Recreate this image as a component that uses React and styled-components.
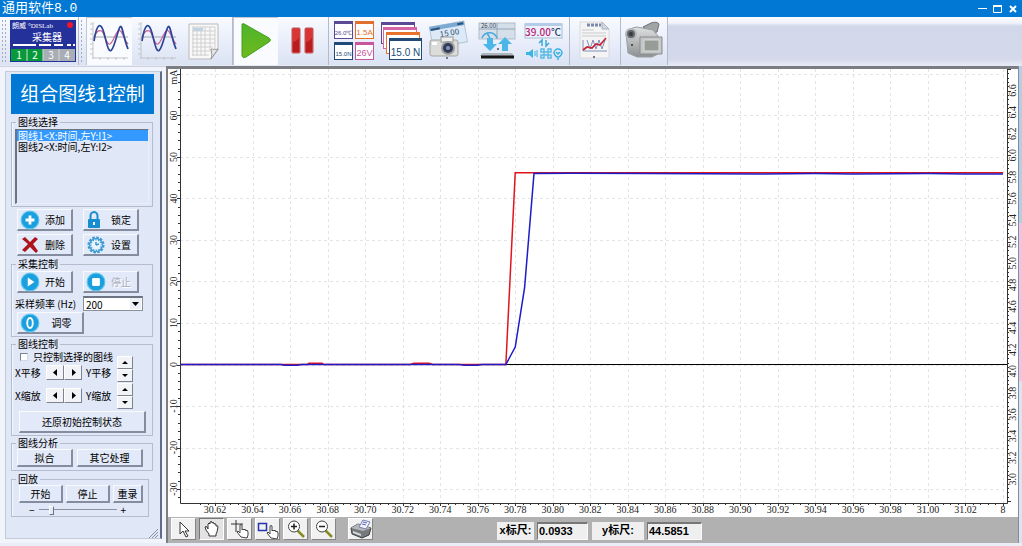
import React, { useLayoutEffect, useRef, useState } from 'react';
import styled, { createGlobalStyle } from 'styled-components';

const GlobalStyle = createGlobalStyle`
  * {
    box-sizing: border-box;
  }

  body {
    margin: 0;
    font-family: 'Noto Sans CJK SC', sans-serif;
    font-size: 10px;
    line-height: 10px;
    color: #000;
  }

  button, input, select {
    font: inherit;
    color: inherit;
    margin: 0;
    padding: 0;
    border-radius: 0;
  }
`;

const Window = styled.div`
  min-height: 100vh;
  display: flex;
  flex-direction: column;
  background: #e9edf6;
`;

/* Title bar */

const TitleBar = styled.header`
  height: 17px;
  padding: 0 4px 0 2px;
  display: flex;
  align-items: center;
  justify-content: space-between;
  background: #0078d4;
  color: #fff;
`;

const Title = styled.h1`
  margin: 0;
  font-family: 'Liberation Mono', 'Noto Sans CJK SC', monospace;
  font-size: 13px;
  font-weight: 400;
  line-height: 17px;
`;

const WindowButtons = styled.div`
  display: flex;
  gap: 4px;
`;

const WindowButton = styled.button`
  width: 11px;
  height: 11px;
  border: 0;
  background: none;

  svg {
    display: block;
  }
`;

/* Toolbar */

const Toolbar = styled.nav`
  height: 49px;
  flex: none;
  display: flex;
  align-items: stretch;
  padding-bottom: 1px;
  background: linear-gradient(#fbfcfe 0, #f0f3fb 6px, #d2d8ea 9px, #d3d9ea 42px, #e6eaf5 48px);
`;

const ToolGroup = styled.div`
  display: flex;
  align-items: stretch;
  border-right: 1px solid #b3bacb;
  background: linear-gradient(#f8faff, #e6ecf9 60%, #dbe2f2);
`;

const Grip = styled.span`
  width: ${(props) => props.$width}px;
  margin: 2px 0;
  background: radial-gradient(circle, #a3abbd 1px, transparent 1px) 0 0 / 4px 4px;
  background-clip: content-box;
  padding: 0 2px;
`;

const ToolButton = styled.button`
  width: ${(props) => props.$width}px;
  border: 0;
  display: flex;
  align-items: center;
  justify-content: center;
  background: ${(props) => (props.$active ? '#fafbfe' : 'none')};
  box-shadow: ${(props) => (props.$active ? 'inset 1px 1px 0 #c3c8d4' : 'none')};
`;

/* Main area */

const Body = styled.div`
  flex: 1;
  display: flex;
  padding-bottom: 3px;
`;

const Sidebar = styled.aside`
  width: 166px;
  flex: none;
  display: flex;
  padding: 4px 4px 4px 5px;
  background: #f1f4fa;
  border-top: 1px solid #ccd2e0;
`;

const Panel = styled.form`
  flex: 1;
  display: flex;
  flex-direction: column;
  padding: 2px 6px 0 5px;
  background: #e0e7f7;
  border: 1px solid #c3cada;
  border-right: 2px solid #5f6d89;
`;

const PanelTitle = styled.h2`
  margin: 0 0 3px;
  height: 40px;
  width: 143px;
  background: #0078d4;
  color: #fff;
  font-size: 19px;
  font-weight: 400;
  line-height: 38px;
  text-align: center;
`;

const Group = styled.fieldset`
  min-width: 0;
  width: ${(props) => (props.$narrow ? 138 : 142)}px;
  margin: 0 0 ${(props) => props.$after || 2}px;
  padding: ${(props) => props.$pad || '2px 3px'};
  border: 1px solid #b4bccd;
  box-shadow: inset 1px 0 0 #f4f7fd;
`;

const Legend = styled.legend`
  margin-left: 1px;
  padding: 0 2px;
  height: 10px;
`;

const Row = styled.div`
  display: flex;
  align-items: ${(props) => props.$align || 'center'};
  gap: ${(props) => props.$gap || 0}px;
  margin-bottom: ${(props) => props.$after || 0}px;
  padding-left: ${(props) => props.$indent || 0}px;
`;

const Column = styled.div`
  display: flex;
  flex-direction: column;
  gap: ${(props) => props.$gap || 0}px;
  padding-top: ${(props) => props.$top || 0}px;
`;

const CurveList = styled.select`
  display: block;
  width: 134px;
  height: 75px;
  overflow: hidden;
  background: #e0e7f7;
  border: 1px solid #e9eef9;
  border-top: 1px solid #6c7484;
  border-left: 2px solid #6c7484;
  outline: 0;

  option {
    display: flex;
    align-items: center;
    height: 11px;
    min-height: 11px;
    padding: 0 0 0 1px;
  }

  option:checked {
    background: #3399ff linear-gradient(#3399ff, #3399ff);
    color: #fff;
    -webkit-text-fill-color: #fff;
  }
`;

const Button = styled.button`
  width: ${(props) => props.$width}px;
  height: ${(props) => (props.$short ? 18 : 22)}px;
  display: flex;
  align-items: center;
  justify-content: ${(props) => (props.$icon ? 'space-between' : 'center')};
  padding: ${(props) => (props.$icon ? '0 6px 0 2px' : '0')};
  background: #e2e9f8;
  border: 1px solid #f8faff;
  border-right: 2px solid #858c9d;
  border-bottom: 2px solid #858c9d;
  white-space: nowrap;

  &:disabled {
    color: #a9afbc;
    text-shadow: 1px 1px 0 #fff;
  }
`;

const RateSelect = styled.span`
  position: relative;
  width: 60px;
  height: 15px;

  select {
    appearance: none;
    display: block;
    width: 100%;
    height: 15px;
    padding-left: 2px;
    background: #fff;
    border: 1px solid #8b909c;
    border-top: 2px solid #6c7484;
    line-height: 11px;
  }

  svg {
    position: absolute;
    right: 2px;
    top: 2px;
    background: #eceff6;
    pointer-events: none;
  }
`;

const CheckLabel = styled.label`
  display: flex;
  align-items: center;
  gap: 5px;
  padding-left: 5px;
  height: 10px;
  white-space: nowrap;

  input {
    appearance: none;
    width: 8px;
    height: 8px;
    background: #fff;
    border: 1px solid #d5d9e2;
    border-top-color: #7c8290;
    border-left-color: #7c8290;
  }

  input:checked {
    background: #3399ff;
  }
`;

const AxisText = styled.span`
  width: ${(props) => props.$width}px;
  white-space: nowrap;
`;

const ArrowButton = styled.button`
  width: ${(props) => (props.$vertical ? 16 : 18)}px;
  height: ${(props) => (props.$vertical ? 13 : 15)}px;
  display: flex;
  align-items: center;
  justify-content: center;
  background: #f1f3f7;
  border: 1px solid #fff;
  border-right-color: #7d8390;
  border-bottom-color: #7d8390;
`;

const Range = styled.input`
  appearance: none;
  width: 78px;
  height: 10px;
  background: linear-gradient(#8b92a1, #8b92a1) 0 4px / 100% 1px no-repeat;

  &::-webkit-slider-thumb {
    appearance: none;
    width: 5px;
    height: 9px;
    background: #e2e9f8;
    border: 1px solid #fff;
    border-right-color: #6c7484;
    border-bottom-color: #6c7484;
  }
`;

const ResizeGrip = styled.svg`
  align-self: flex-end;
  margin: auto -4px 0 0;
`;

const Workspace = styled.main`
  flex: 1;
  min-width: 0;
  display: flex;
  flex-direction: column;
  border-top: 3px solid #7b7d82;
  border-left: 2px solid #7b7d82;
`;

const ChartArea = styled.div`
  flex: 1;
  min-height: 300px;
  position: relative;
  background: #fff;
`;

const ChartSvg = styled.svg`
  position: absolute;
  inset: 0;
  width: 100%;
  height: 100%;

  text {
    font-family: 'Liberation Serif', serif;
    font-size: 10px;
    fill: #222;
    text-anchor: middle;
  }
`;

const WindowEdge = styled.div`
  width: 4px;
  flex: none;
  border-left: 1px solid #7c8db0;
  background: linear-gradient(#b9cddf 0 33%, #f2c4dc 33% 66%, #dfe3ea 66%);
`;

const StatusBar = styled.footer`
  height: 26px;
  flex: none;
  display: flex;
  align-items: flex-start;
  padding: 1px 3px;
  background: #b1b1b1;
`;

const Tools = styled.div`
  display: flex;
  gap: 3px;
  width: 326px;
`;

const StatusButton = styled.button`
  width: 25px;
  height: 22px;
  flex: none;
  display: flex;
  align-items: center;
  justify-content: center;
  margin-left: ${(props) => (props.$apart ? 9 : 0)}px;
  background: ${(props) => (props.$active ? '#e3e3e3' : '#f1f1f1')};
  border: 1px solid;
  border-color: ${(props) => (props.$active ? '#777 #fff #fff #777' : '#fff #858585 #858585 #fff')};
`;

const Readout = styled.label`
  display: flex;
  gap: 3px;
  margin: 4px 4px 0 0;
  height: 18px;
  font-family: 'Liberation Sans', 'Noto Sans CJK SC', sans-serif;
  font-size: 11px;
  font-weight: 700;
  line-height: 17px;

  span {
    width: ${(props) => props.$width}px;
    background: #efefef;
    text-align: center;
    white-space: nowrap;
  }

  input {
    width: ${(props) => props.$field}px;
    padding-left: 1px;
    background: #efefef;
    border: 1px solid #fafafa;
    border-top: 2px solid #777;
    border-left: 1px solid #777;
  }
`;

/* Toolbar drawings */

const CollectorIcon = () => (
  <svg width="66" height="42" viewBox="0 0 66 42">
    <rect width="66" height="42" fill="#25319a" />
    <text x="2" y="8" fontSize="7" fill="#fff">朗威</text>
    <text x="18" y="8" fontSize="7" fill="#fff" fontFamily="Liberation Serif">°DISLab</text>
    <circle cx="60" cy="5" r="3" fill="#f0142c" />
    <text x="37" y="21" fontSize="10" fill="#fff" textAnchor="middle">采集器</text>
    <path d="M3 25h23M29 25h12M44 25h9M57 25h4M63 25h2" stroke="#fff" strokeWidth="2" />
    <rect x="1" y="29" width="32" height="12" fill="#079a3a" />
    <rect x="33" y="29" width="32" height="12" fill="#a9adb4" />
    <path d="M17 29v12M33 29v12M49 29v12" stroke="#d5d9df" />
    {['1', '2', '3', '4'].map((n, i) => (
      <text key={n} x={9 + i * 16} y="39" fontSize="10" fill="#fff" textAnchor="middle">{n}</text>
    ))}
  </svg>
);

const WaveIcon = () => (
  <svg width="42" height="42" viewBox="0 0 42 42" fill="none">
    <path d="M5 2v37M4 38h36M2 4h3M2 9h3M2 14h3M2 19h3M2 24h3M2 29h3M2 34h3M12 37v3M20 37v3M28 37v3M36 37v3" stroke="#c3c5ca" />
    <path d="M5 17h35" stroke="#a5a8ae" />
    <path d="M6 18C8 11 13 7 16 15s5 13 9 5 6-14 10-5 4 7 5 9" stroke="#c96095" strokeWidth="1.2" />
    <path d="M6 21C9 2 13 2 16 13s5 26 10 12 6-26 9-13 4 14 5 17" stroke="#2e4595" strokeWidth="1.7" />
  </svg>
);

const SheetIcon = () => (
  <svg width="38" height="38" viewBox="0 0 38 38">
    <path d="M1 2h29v26l-7 9H1z" fill="#f8f8f8" stroke="#b9b9bb" />
    <path d="M5 6h10v3H5z" fill="#b9d3ee" />
    <path d="M4 5h23v22M4 9h23M4 13h23M4 17h23M4 21h23M4 25h21M4 29h19M4 33h17M5 5v29M9 5v29M13 5v29M17 5v29M22 5v24" stroke="#d0d0d2" fill="none" />
    <path d="M30 27c-3 1-5 0-7 0 1 4 1 7 0 10z" fill="#e6e6e6" stroke="#989898" />
  </svg>
);

const PlayIcon = () => (
  <svg width="32" height="36" viewBox="0 0 32 36">
    <defs>
      <linearGradient id="play" x1="0" y1="0" x2="0" y2="1">
        <stop offset="0" stopColor="#4db52a" />
        <stop offset="1" stopColor="#70b91c" />
      </linearGradient>
    </defs>
    <path d="M2 1q2-1 4 1l23 13q3 2 0 4L6 34q-3 2-4-1z" fill="url(#play)" stroke="#43a01f" />
  </svg>
);

const PauseIcon = () => (
  <svg width="26" height="30" viewBox="0 0 26 30">
    <rect x="2" y="2" width="8" height="25" rx="1" fill="#d83535" stroke="#c05555" />
    <rect x="15" y="2" width="8" height="25" rx="1" fill="#d83535" stroke="#c05555" />
    <path d="M3 16q4-1 6-4v14H3zM16 16q4-1 6-4v14h-6z" fill="#b91c1f" />
  </svg>
);

const Meter = ({ x, y, w, h, color, label, size }) => (
  <g>
    <rect x={x + 0.5} y={y + 0.5} width={w - 1} height={h - 1} fill="#fff" stroke={color} />
    <rect x={x} y={y} width={w} height="3" fill={color} />
    <text x={x + w / 2} y={y + h - 4} fontSize={size} fill={color} textAnchor="middle" fontFamily="Liberation Sans">
      {label}
    </text>
  </g>
);

const MetersIcon = () => (
  <svg width="42" height="40" viewBox="0 0 42 40">
    <Meter x={1} y={0} w={19} h={18} color="#5a4a96" label="26.0℃" size={6} />
    <Meter x={22} y={0} w={19} h={18} color="#e0702c" label="1.5A" size={8} />
    <Meter x={1} y={21} w={19} h={18} color="#214a78" label="15.0N" size={6} />
    <Meter x={22} y={21} w={19} h={18} color="#c6559b" label="26V" size={9} />
  </svg>
);

const StackIcon = () => (
  <svg width="42" height="40" viewBox="0 0 42 40">
    <Meter x={0} y={1} w={34} h={22} color="#5a4a96" />
    <Meter x={2} y={6} w={34} h={22} color="#d665a5" />
    <Meter x={5} y={11} w={34} h={22} color="#e8722c" />
    <Meter x={8} y={17} w={33} h={22} color="#214a78" label="15.0 N" size={10} />
  </svg>
);

const SnapshotIcon = () => (
  <svg width="42" height="42" viewBox="0 0 42 42">
    <g transform="rotate(-10 20 15)">
      <rect x="3" y="4" width="35" height="21" fill="#dce9f6" stroke="#b7c5d5" />
      <rect x="3" y="4" width="35" height="4" fill="#7daad0" />
      <path d="M4 7h9M31 6h6" stroke="#29527c" strokeWidth="2" />
      <text x="12" y="16" fontSize="8" fill="#29496c">15 00</text>
    </g>
    <rect x="2" y="20" width="28" height="16" rx="2" fill="#dcdcda" stroke="#a3a3a3" />
    <rect x="13" y="17" width="12" height="5" fill="#efefef" stroke="#999" />
    <circle cx="20" cy="28" r="7" fill="#9c9ea3" />
    <circle cx="20" cy="28" r="5" fill="#333c55" />
    <circle cx="20" cy="28" r="2" fill="#8295c5" />
    <path d="M4 22h5v3H4z" fill="#fff" />
    <circle cx="19" cy="38" r="1" fill="#456" />
  </svg>
);

const TransferIcon = () => (
  <svg width="38" height="42" viewBox="0 0 38 42">
    <rect x="1" y="3" width="36" height="16" fill="#d5dfea" stroke="#b3becb" />
    <path d="M19 3v16M19 9h18M1 9h18" stroke="#93a5b8" />
    <text x="3" y="8" fontSize="6" fill="#345">26.00</text>
    <path d="M4 18a8 8 0 0 1 15 0M12 18l-3-5" fill="none" stroke="#49a8dc" strokeWidth="1.5" />
    <path d="M9 18h6v6h4l-7 7-7-7h4zM24 31v-7h-4l7-7 7 7h-4v7z" fill="#4db6e8" />
    <path d="M4 33h30l2 3H2z" fill="#aeb5bd" />
    <path d="M3 37h33" stroke="#151515" strokeWidth="3" />
    <circle cx="20" cy="29" r="1" fill="#456" />
  </svg>
);

const DisplayIcon = () => (
  <svg width="40" height="42" viewBox="0 0 40 42">
    <rect x="1" y="4" width="37" height="14" fill="#edf3fc" stroke="#a9bdd6" />
    <rect x="1" y="3" width="37" height="3" fill="#b5cce6" />
    <text x="19" y="16" fontSize="10" fontWeight="500" fill="#b81f74" textAnchor="middle">
      39.00<tspan fill="#26436b">℃</tspan>
    </text>
    <path d="M18 26v-6l-3 3M22 20v6l3-3" fill="none" stroke="#38a9d6" strokeWidth="1.5" />
    <path d="M2 32h3l4-3v9l-4-3H2z" fill="#38b6e4" />
    <path d="M11 31v5M13 30v7" stroke="#38b6e4" />
    <path d="M17 29h3v3h4v-3h3v3h-3v3h3v3h-3v-3h-4v3h-3v-3h3v-3h-3z" fill="none" stroke="#5abbe4" strokeWidth="1.5" />
    <path d="M30 33a4 4 0 1 1 8 0q-1 3-3 4h-2q-2-1-3-4zM32 32l2 2 2-2M33 39h2" stroke="#39afe1" fill="none" strokeWidth="1.5" />
  </svg>
);

const ReportIcon = () => (
  <svg width="34" height="42" viewBox="0 0 34 42">
    <path d="M2 2h22l7 7v29H2z" fill="#f4f4f4" stroke="#dadadd" />
    <path d="M24 2v7h7z" fill="#d4dae3" stroke="#a9b1bd" />
    <path d="M9 5h14" stroke="#7b89aa" strokeWidth="3" strokeDasharray="3 1" />
    <path d="M4 10h12M4 13h24M4 16h24" stroke="#c9cbd0" />
    <path d="M5 20v11h24M9 20l3 9 3-9 3 9 3-9 3 9 3-9" fill="none" stroke="#8190b9" />
    <path d="M5 30l4-3 5 1 4-4 4 1 6-7" fill="none" stroke="#c5243b" strokeWidth="1.7" />
    <circle cx="16" cy="37" r="1" fill="#456" />
  </svg>
);

const CamcorderIcon = () => (
  <svg width="42" height="40" viewBox="0 0 42 40">
    <defs>
      <linearGradient id="camcorder" x1="0" y1="0" x2="0" y2="1">
        <stop offset="0" stopColor="#dfe0e1" />
        <stop offset="1" stopColor="#8d9092" />
      </linearGradient>
    </defs>
    <path d="M20 6l8-4q6-2 8 1l-2 8-5 1z" fill="#a2a4a5" stroke="#6c7073" />
    <path d="M3 12Q6 7 14 6l16 3 5 6v18l-6 3H14l-9-4z" fill="url(#camcorder)" stroke="#9a9da0" />
    <circle cx="8" cy="13" r="5" fill="#63676b" stroke="#b4b8bb" strokeWidth="2" />
    <circle cx="8" cy="13" r="2" fill="#35393d" />
    <path d="M17 16h22v17H17z" fill="#c3c5c6" stroke="#8b8b8b" />
    <path d="M21 19h15v11H21z" fill="#989c96" stroke="#dadcda" />
    <circle cx="9" cy="24" r="1" fill="#333" />
  </svg>
);

/* Sidebar drawings */

const RoundIcon = ({ children }) => (
  <svg width="20" height="20" viewBox="0 0 18 18">
    <circle cx="9" cy="9" r="8" fill="#1aa0de" stroke="#60c5ed" />
    {children}
  </svg>
);

const AddIcon = () => (
  <RoundIcon>
    <path d="M9 5v8M5 9h8" stroke="#fff" strokeWidth="2.5" />
  </RoundIcon>
);

const StartIcon = () => (
  <RoundIcon>
    <path d="M7 5l6 4-6 4z" fill="#fff" />
  </RoundIcon>
);

const StopIcon = () => (
  <RoundIcon>
    <rect x="5.5" y="5.5" width="7" height="7" rx="1" fill="#fff" />
  </RoundIcon>
);

const ZeroIcon = () => (
  <RoundIcon>
    <ellipse cx="9" cy="9" rx="2.500" ry="4.500" fill="none" stroke="#fff" strokeWidth="1.700" />
  </RoundIcon>
);

const LockIcon = () => (
  <svg width="18" height="18" viewBox="0 0 18 18">
    <path d="M4.500 9V5a3.500 4 0 0 1 7 0v4" fill="none" stroke="#168dce" strokeWidth="2" />
    <rect x="2" y="8" width="12" height="9" rx="1" fill="#168dce" />
    <path d="M8 11v3" stroke="#fff" strokeWidth="2" />
  </svg>
);

const DeleteIcon = () => (
  <svg width="20" height="18" viewBox="0 0 18 18">
    <path d="M1 3l3-2 5 5 5-5 3 2-5 5 5 7-2 2-6-6-5 5-3-2 6-6z" fill="#ad1419" />
  </svg>
);

const GearIcon = () => (
  <svg width="20" height="18" viewBox="0 0 18 18" fill="none">
    <circle cx="9" cy="9" r="7" fill="#3698d2" />
    <circle cx="9" cy="9" r="7.500" stroke="#3698d2" strokeWidth="2" strokeDasharray="2.500 1.430" />
    <circle cx="9" cy="9" r="4.500" fill="#eaf4fb" />
    <circle cx="9" cy="9" r="5" stroke="#eaf4fb" strokeWidth="1.500" strokeDasharray="1.600 1" />
    <path d="M9 9l3-1M9 9V6" stroke="#3698d2" strokeWidth="1.500" />
  </svg>
);

const arrowPaths = {
  left: 'M6 1v7L2 4.500z',
  right: 'M3 1v7l4-3.500z',
  up: 'M1 6h6L4 3z',
  down: 'M1 3h6L4 6z',
};

const Arrow = ({ dir }) => (
  <svg width="9" height="9" viewBox="0 0 9 9">
    <path d={arrowPaths[dir]} fill="#000" />
  </svg>
);

/* Status bar drawings */

const PointerHand = ({ x, y }) => (
  <path
    transform={`translate(${x} ${y})`}
    d="M4 13L0 8l1-1 2 2V1q1-1 2 0v5l1-1 1 1 1-1 1 2 1-1 1 2v3l-1 3z"
    fill="#fff"
    stroke="#444"
  />
);

const StatusIcon = ({ kind }) => (
  <svg width="22" height="20" viewBox="0 0 22 20" fill="none">
    {kind === 'cursor' && <path d="M7 3v12l3-3 3 6 2-1-3-5h4z" fill="#fff" stroke="#333" />}
    {kind === 'hand' && (
      <path
        d="M8 17v-2l-3-4-1-3q1-1 2 0l1 2V5q1-2 2 0V3q1-1 2 0v1q1-1 2 0v1q2-1 2 1v1q2-1 2 1l-1 5-1 2v2z"
        fill="#fff"
        stroke="#333"
      />
    )}
    {kind === 'cross' && (
      <>
        <path d="M7 1v12M2 5h12" stroke="#333" />
        <PointerHand x={8} y={5} />
      </>
    )}
    {kind === 'region' && (
      <>
        <rect x="1.500" y="4.500" width="8" height="7" stroke="#2734ae" strokeWidth="1.500" />
        <PointerHand x={10} y={6} />
      </>
    )}
    {(kind === 'zoomIn' || kind === 'zoomOut') && (
      <>
        <path d="M12 11l7 7" stroke="#888b24" strokeWidth="2.500" />
        <circle cx="9" cy="7.500" r="5.500" fill="#fff" stroke="#444" />
        <path d={kind === 'zoomIn' ? 'M6 7.500h6M9 4.500v6' : 'M6 7.500h6'} stroke="#222" strokeWidth="1.500" />
      </>
    )}
    {kind === 'print' && (
      <>
        <path d="M1 9l7-4 13 4-2 7-7 3-10-4z" fill="#777a7c" stroke="#3e4143" />
        <path d="M1 9l7-4 13 4-8 3z" fill="#b5b7b9" />
        <path d="M9 8l4-7 7 2-4 7z" fill="#f5f7ff" stroke="#7780b1" />
        <path d="M13 3l4 1M12 5l4 1" stroke="#5260b8" />
        <path d="M3 12l8 3v2l-8-3z" fill="#d9dadb" />
      </>
    )}
  </svg>
);

/* Chart */

const margin = { left: 12, right: 11, end: 15, bottom: 14 };
const timeRange = [30.6013, 31.04];
const leftRange = [-33.37, 71.2];
const rightRange = [2.78, 6.8];

const redCurve = [[30.6013, 0], [30.669, 0], [30.67, 0.3], [30.677, 0.3], [30.678, 0], [30.724, 0], [30.726, 0.3], [30.734, 0.3], [30.736, 0], [30.775, 0], [30.78, 46.2], [31.04, 46.2]];
const blueCurve = [[30.6013, 0], [30.655, 0], [30.657, -0.2], [30.664, -0.2], [30.666, 0], [30.75, 0], [30.753, -0.2], [30.76, -0.2], [30.762, 0], [30.775, 0], [30.78, 4.2], [30.785, 18.6], [30.79, 46], [30.81, 46.1], [30.85, 46], [30.91, 45.9], [30.94, 46], [30.96, 45.9], [31, 46], [31.02, 45.9], [31.04, 45.9]];

const steps = (from, to, step) => {
  const list = [];
  for (let i = Math.ceil(from / step); i * step <= to; i += 1) list.push(i);
  return list;
};

const Chart = () => {
  const ref = useRef(null);
  const [size, setSize] = useState({ width: 850, height: 448 });

  useLayoutEffect(() => {
    const measure = () => {
      const box = ref.current.getBoundingClientRect();
      setSize({ width: box.width, height: box.height });
    };
    measure();
    const observer = new ResizeObserver(measure);
    observer.observe(ref.current);
    return () => observer.disconnect();
  }, []);

  const { width, height } = size;
  const right = width - margin.right;
  const bottom = height - margin.bottom;
  const x = (t) => margin.left + ((t - timeRange[0]) / (timeRange[1] - timeRange[0])) * (width - margin.end - margin.left);
  const scaleY = (range) => (v) => ((range[1] - v) / (range[1] - range[0])) * bottom;
  const y = scaleY(leftRange);
  const yRight = scaleY(rightRange);
  const line = (points) => points.map(([t, v]) => `${x(t)},${y(v)}`).join(' ');

  const times = steps(timeRange[0], 31.03, 0.02);
  const lefts = steps(leftRange[0], 66, 10);
  const rights = steps(2.95, 6.65, 0.2);

  return (
    <ChartArea ref={ref}>
      <ChartSvg>
        <g stroke="#e4e4e4" strokeDasharray="3 3">
          {times.map((i) => (
            <path key={i} d={`M${Math.round(x(i * 0.02)) + 0.5} 0V${bottom}`} />
          ))}
          <path d={`M${width - margin.end + 0.5} 0V${bottom}`} />
          {[...lefts, 7].map((i) => (
            <path key={i} d={`M${margin.left} ${Math.round(y(i * 10)) + 0.5}H${right - 4}`} />
          ))}
        </g>
        <g stroke="#333" fill="none">
          <path d={`M${margin.left + 0.5} 0V${bottom + 0.5}H${right + 0.5}V0`} />
          {steps(timeRange[0] + 0.01, timeRange[1], 0.004).map((i) => (
            <path key={i} d={`M${Math.round(x(i * 0.004)) + 0.5} ${bottom}v${i % 5 ? 2 : 3}`} />
          ))}
          {steps(leftRange[0], leftRange[1], 2).map((i) => (
            <path key={i} d={`M${margin.left} ${Math.round(y(i * 2)) + 0.5}h${i % 5 ? -2 : -3}`} />
          ))}
          {steps(rightRange[0], rightRange[1], 0.04).map((i) => (
            <path key={i} d={`M${right} ${Math.round(yRight(i * 0.04)) + 0.5}h${i % 5 ? 2 : 4}`} />
          ))}
        </g>
        <path d={`M${margin.left} ${Math.round(y(0)) - 0.5}H${right}`} stroke="#000" />
        <polyline points={line(redCurve)} fill="none" stroke="#e0141c" strokeWidth="1.500" />
        <polyline points={line(blueCurve)} fill="none" stroke="#1c1cc8" strokeWidth="1.500" />
        {times.map((i) => (
          <text key={i} x={x(i * 0.02)} y={height - 4}>{(i * 0.02).toFixed(2)}</text>
        ))}
        <text x={width - margin.end} y={height - 4}>8</text>
        {lefts.map((i) => (
          <text key={i} transform={`translate(9 ${y(i * 10)}) rotate(-90)`}>{i * 10}</text>
        ))}
        <text transform="translate(9 8) rotate(-90)">mA</text>
        {rights.map((i) => (
          <text key={i} transform={`translate(${width - 2} ${yRight(i * 0.2)}) rotate(-90)`}>{(i * 0.2).toFixed(1)}</text>
        ))}
      </ChartSvg>
    </ChartArea>
  );
};

const AxisRow = ({ action }) => (
  <Row $gap={4}>
    <Row>
      <AxisText $width={31}>X{action}</AxisText>
      <ArrowButton type="button" aria-label={`X${action} -`}><Arrow dir="left" /></ArrowButton>
      <ArrowButton type="button" aria-label={`X${action} +`}><Arrow dir="right" /></ArrowButton>
    </Row>
    <AxisText $width={26}>Y{action}</AxisText>
  </Row>
);

const Spinner = ({ label }) => (
  <Column>
    <ArrowButton type="button" $vertical aria-label={`${label} +`}><Arrow dir="up" /></ArrowButton>
    <ArrowButton type="button" $vertical aria-label={`${label} -`}><Arrow dir="down" /></ArrowButton>
  </Column>
);

const ControlPanel = () => (
  <Panel>
    <PanelTitle>组合图线1控制</PanelTitle>

    <Group>
      <Legend>图线选择</Legend>
      <CurveList size={7} defaultValue="1" aria-label="图线选择">
        <option value="1">图线1&lt;X:时间,左Y:I1&gt;</option>
        <option value="2">图线2&lt;X:时间,左Y:I2&gt;</option>
      </CurveList>
    </Group>

    <Row $gap={10} $indent={6} $after={3}>
      <Button type="button" $width={56} $icon><AddIcon />添加</Button>
      <Button type="button" $width={56} $icon><LockIcon />锁定</Button>
    </Row>
    <Row $gap={10} $indent={6} $after={3}>
      <Button type="button" $width={56} $icon><DeleteIcon />删除</Button>
      <Button type="button" $width={56} $icon><GearIcon />设置</Button>
    </Row>

    <Group>
      <Legend>采集控制</Legend>
      <Row $gap={10} $indent={2} $after={3}>
        <Button type="button" $width={56} $icon><StartIcon />开始</Button>
        <Button type="button" $width={56} $icon disabled><StopIcon />停止</Button>
      </Row>
      <Row $after={1}>
        <AxisText as="label" htmlFor="rate" $width={68}>采样频率 (Hz)</AxisText>
        <RateSelect>
          <select id="rate" defaultValue="200">
            <option>100</option>
            <option>200</option>
            <option>500</option>
          </select>
          <svg width="11" height="11" viewBox="0 0 11 11"><path d="M2 4h7L5.500 8z" /></svg>
        </RateSelect>
      </Row>
      <Row $indent={2}>
        <Button type="button" $width={67} $icon><ZeroIcon /><span>调零&nbsp;&nbsp;</span></Button>
      </Row>
    </Group>

    <Group>
      <Legend>图线控制</Legend>
      <Row $gap={4} $align="flex-start" $after={2}>
        <Column $gap={8} $top={1}>
          <Column $gap={3}>
            <CheckLabel><input type="checkbox" />只控制选择的图线</CheckLabel>
            <AxisRow action="平移" />
          </Column>
          <AxisRow action="缩放" />
        </Column>
        <Column $gap={1} $top={5}>
          <Spinner label="Y平移" />
          <Spinner label="Y缩放" />
        </Column>
      </Row>
      <Row $indent={4}>
        <Button type="button" $width={127}>还原初始控制状态</Button>
      </Row>
    </Group>

    <Group $pad="1px 3px 3px" $after={3}>
      <Legend>图线分析</Legend>
      <Row $gap={4} $indent={2}>
        <Button type="button" $width={56} $short>拟合</Button>
        <Button type="button" $width={66} $short>其它处理</Button>
      </Row>
    </Group>

    <Group $narrow $pad="1px 3px">
      <Legend>回放</Legend>
      <Row $gap={3} $indent={4} $after={2}>
        <Button type="button" $width={44} $short>开始</Button>
        <Button type="button" $width={44} $short>停止</Button>
        <Button type="button" $width={30} $short>重录</Button>
      </Row>
      <Row $gap={4} $indent={14}>
        <span>−</span>
        <Range type="range" defaultValue="14" aria-label="回放" />
        <span>+</span>
      </Row>
    </Group>

    <ResizeGrip width="9" height="9" viewBox="0 0 9 9">
      <path d="M0 9l9-9M3 9l6-6M6 9l3-3" stroke="#8b92a1" />
    </ResizeGrip>
  </Panel>
);

const App = () => (
  <Window>
    <GlobalStyle />
    <TitleBar>
      <Title>通用软件8.0</Title>
      <WindowButtons>
        <WindowButton aria-label="最小化">
          <svg width="11" height="11"><path d="M1 5.500h9" stroke="#fff" /></svg>
        </WindowButton>
        <WindowButton aria-label="还原">
          <svg width="11" height="11"><path d="M1.500 9.500v-6h8v6zM1 2.500h9M1 3.500h9" stroke="#fff" fill="none" /></svg>
        </WindowButton>
        <WindowButton aria-label="关闭">
          <svg width="11" height="11"><path d="M3 3l6 6M9 3l-6 6" stroke="#fff" strokeWidth="2" /></svg>
        </WindowButton>
      </WindowButtons>
    </TitleBar>

    <Toolbar>
      <ToolGroup>
        <Grip $width={8} />
        <ToolButton $width={70} aria-label="采集器"><CollectorIcon /></ToolButton>
      </ToolGroup>
      <ToolGroup>
        <Grip $width={7} />
        <ToolButton $width={46} $active aria-label="组合图线"><WaveIcon /></ToolButton>
        <ToolButton $width={50} aria-label="示波"><WaveIcon /></ToolButton>
        <ToolButton $width={50} aria-label="表格"><SheetIcon /></ToolButton>
      </ToolGroup>
      <ToolGroup>
        <ToolButton $width={45} $active aria-label="开始"><PlayIcon /></ToolButton>
        <ToolButton $width={50} aria-label="暂停"><PauseIcon /></ToolButton>
      </ToolGroup>
      <ToolGroup>
        <ToolButton $width={50} aria-label="平铺"><MetersIcon /></ToolButton>
        <ToolButton $width={45} aria-label="层叠"><StackIcon /></ToolButton>
        <ToolButton $width={50} aria-label="拍照"><SnapshotIcon /></ToolButton>
        <ToolButton $width={45} aria-label="存取"><TransferIcon /></ToolButton>
        <ToolButton $width={50} aria-label="显示"><DisplayIcon /></ToolButton>
      </ToolGroup>
      <ToolGroup>
        <ToolButton $width={50} aria-label="报告"><ReportIcon /></ToolButton>
      </ToolGroup>
      <ToolGroup>
        <ToolButton $width={46} aria-label="摄像"><CamcorderIcon /></ToolButton>
      </ToolGroup>
    </Toolbar>

    <Body>
      <Sidebar>
        <ControlPanel />
      </Sidebar>
      <Workspace>
        <Chart />
        <StatusBar>
          <Tools>
            <StatusButton aria-label="选择"><StatusIcon kind="cursor" /></StatusButton>
            <StatusButton $active aria-label="移动"><StatusIcon kind="hand" /></StatusButton>
            <StatusButton aria-label="取点"><StatusIcon kind="cross" /></StatusButton>
            <StatusButton aria-label="选区"><StatusIcon kind="region" /></StatusButton>
            <StatusButton aria-label="放大"><StatusIcon kind="zoomIn" /></StatusButton>
            <StatusButton aria-label="缩小"><StatusIcon kind="zoomOut" /></StatusButton>
            <StatusButton $apart aria-label="打印"><StatusIcon kind="print" /></StatusButton>
          </Tools>
          <Readout $width={37} $field={51}>
            <span>x标尺:</span>
            <input defaultValue="0.0933" readOnly />
          </Readout>
          <Readout $width={52} $field={55}>
            <span>y标尺:</span>
            <input defaultValue="44.5851" readOnly />
          </Readout>
        </StatusBar>
      </Workspace>
      <WindowEdge />
    </Body>
  </Window>
);

export default App;
